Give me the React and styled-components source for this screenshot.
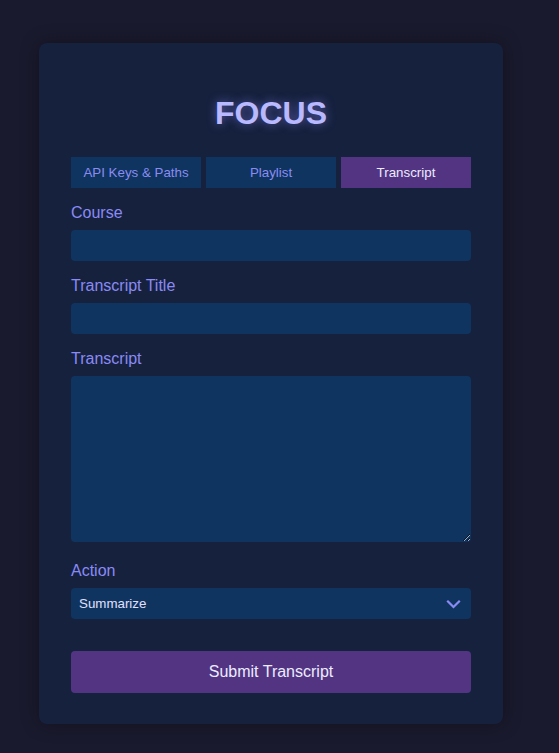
import React, { useState } from 'react';
import styled, { createGlobalStyle } from 'styled-components';

const GlobalStyle = createGlobalStyle`
  html, body {
    margin: 0;
    padding: 0;
    background: #1a1a2e;
    font-family: "Liberation Sans", Arial, sans-serif;
  }
`;

const Page = styled.div`
  display: flex;
  justify-content: center;
  min-height: 753px;
  padding: 43px 17px 0 0;
  box-sizing: border-box;
`;

const Card = styled.div`
  width: 464px;
  height: 681px;
  box-sizing: border-box;
  padding: 32px;
  background: #16213e;
  border-radius: 8px;
  box-shadow: 0 0 18px rgba(0, 0, 0, 0.35);
`;

const Title = styled.h1`
  margin: 20px 0 25px;
  height: 37px;
  line-height: 37px;
  text-align: center;
  font-size: 32px;
  font-weight: bold;
  color: #b9b9ff;
  text-shadow: 0 0 10px rgba(140, 140, 255, 0.55);
`;

const Tabs = styled.div`
  display: grid;
  grid-template-columns: repeat(3, 1fr);
  gap: 5px;
  margin-bottom: 15px;
`;

const Tab = styled.button`
  height: 31px;
  border: none;
  padding: 0;
  font-family: inherit;
  font-size: 13.333px;
  cursor: pointer;
  background: ${(p) => (p.$active ? '#533483' : '#0f3460')};
  color: ${(p) => (p.$active ? '#ececff' : '#8a8cf2')};
`;

const Field = styled.div`
  margin-bottom: ${(p) => p.$gap || 15}px;
`;

const Label = styled.label`
  display: block;
  height: 18px;
  line-height: 20px;
  margin-bottom: 9px;
  font-size: 16px;
  color: #8a8af5;
`;

const Input = styled.input`
  display: block;
  width: 100%;
  height: 31px;
  box-sizing: border-box;
  border: none;
  border-radius: 4px;
  padding: 0 8px;
  background: #0f3460;
  color: #e0e0ff;
  font-family: inherit;
  font-size: 13.333px;
  outline: none;
`;

const TextArea = styled.textarea`
  display: block;
  width: 100%;
  height: 166px;
  box-sizing: border-box;
  border: none;
  border-radius: 4px;
  padding: 8px;
  background: #0f3460;
  color: #e0e0ff;
  font-family: inherit;
  font-size: 13.333px;
  resize: vertical;
  outline: none;
`;

const Select = styled.select`
  display: block;
  width: 100%;
  height: 31px;
  box-sizing: border-box;
  border: none;
  border-radius: 4px;
  padding: 0 30px 0 8px;
  background-color: #0f3460;
  background-image: url("data:image/svg+xml;utf8,<svg xmlns='http://www.w3.org/2000/svg' width='15' height='10' viewBox='0 0 15 10' fill='none' stroke='%238a8af5' stroke-width='2.2' stroke-linecap='square' stroke-linejoin='miter'><polyline points='2 2.5 7.5 8 13 2.5'/></svg>");
  background-repeat: no-repeat;
  background-position: right 10px center;
  color: #e0e0ff;
  font-family: inherit;
  font-size: 13.333px;
  appearance: none;
  outline: none;
`;

const Submit = styled.button`
  display: block;
  width: 100%;
  height: 42px;
  border: none;
  border-radius: 4px;
  background: #533483;
  color: #ececff;
  font-family: inherit;
  font-size: 16px;
  cursor: pointer;
`;

const tabs = ['API Keys & Paths', 'Playlist', 'Transcript'];

export default function App() {
  const [active, setActive] = useState('Transcript');

  return (
    <>
      <GlobalStyle />
      <Page>
        <Card>
          <Title>FOCUS</Title>
          <Tabs>
            {tabs.map((t) => (
              <Tab key={t} type="button" $active={active === t} onClick={() => setActive(t)}>
                {t}
              </Tab>
            ))}
          </Tabs>
          <Field>
            <Label htmlFor="course">Course</Label>
            <Input id="course" />
          </Field>
          <Field>
            <Label htmlFor="title">Transcript Title</Label>
            <Input id="title" />
          </Field>
          <Field $gap={19}>
            <Label htmlFor="transcript">Transcript</Label>
            <TextArea id="transcript" />
          </Field>
          <Field $gap={32}>
            <Label htmlFor="action">Action</Label>
            <Select id="action" defaultValue="summarize">
              <option value="summarize">Summarize</option>
              <option value="notes">Notes</option>
            </Select>
          </Field>
          <Submit type="button">Submit Transcript</Submit>
        </Card>
      </Page>
    </>
  );
}
